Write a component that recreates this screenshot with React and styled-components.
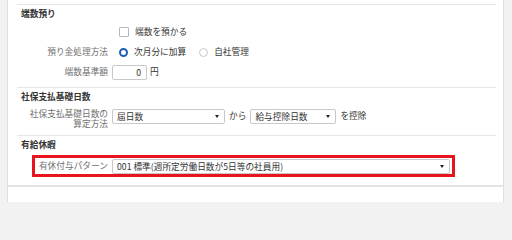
import React from 'react';
import styled, { createGlobalStyle } from 'styled-components';

const GlobalStyle = createGlobalStyle`
  html, body {
    margin: 0;
    padding: 0;
    background: #f2f2f2;
  }
  body {
    font-family: "Noto Sans CJK JP", "Liberation Sans", sans-serif;
    font-size: 8.7px;
    color: #333;
  }
`;

const Page = styled.div`
  width: 512px;
  height: 202px;
  padding: 0 8px 0 7px;
  box-sizing: border-box;
  overflow: hidden;
`;

const Panel = styled.div`
  background: #fff;
  border: 1px solid #e0e0e0;
  border-top: none;
  box-shadow: 0 1px 0 #e8e8e8;
`;

const PanelBody = styled.div`
  padding: 4px 7px 4px 9px;
  border-bottom: 2px solid #e4e4e4;
`;

const PanelFooter = styled.div`
  height: 19px;
`;

const Group = styled.div`
  border-top: 1px solid #e6e6e6;
  padding: 0 0 ${(p) => p.$bottom || 7}px 4px;
`;

const Heading = styled.div`
  padding-top: 3px;
  height: 12px;
  line-height: 12px;
  font-weight: bold;
  color: #333;
  margin-bottom: 4px;
`;

const Rows = styled.div`
  display: flex;
  flex-direction: column;
  gap: 4px;
`;

const Row = styled.div`
  display: flex;
  align-items: ${(p) => (p.$top ? 'flex-start' : 'center')};
  min-height: 16px;
  gap: 4px;
`;

const Label = styled.div`
  width: ${(p) => p.$width || 87}px;
  flex: none;
  text-align: right;
  color: #707070;
  line-height: ${(p) => (p.$multi ? '10px' : '16px')};
  padding-top: ${(p) => (p.$multi ? '2px' : '0')};
  white-space: nowrap;
`;

const Controls = styled.div`
  display: flex;
  align-items: center;
  gap: ${(p) => p.$gap || 0}px;
  padding-left: ${(p) => p.$indent || 0}px;
  margin-top: ${(p) => p.$mt || 0}px;
`;

const Option = styled.label`
  display: flex;
  align-items: center;
  gap: 6px;
  color: #333;
  line-height: 16px;
`;

const CheckBox = styled.span`
  width: 8px;
  height: 8px;
  border: 1px solid #b8b8b8;
  border-radius: 1px;
  background: #fff;
`;

const Radio = styled.span`
  box-sizing: border-box;
  width: 9px;
  height: 9px;
  border-radius: 50%;
  background: #fff;
  border: ${(p) => (p.$checked ? '2.5px solid #1c5fb5' : '1px solid #c8c8c8')};
`;

const NumberInput = styled.div`
  box-sizing: border-box;
  width: 35px;
  height: 15px;
  border: 1px solid #c8c8c8;
  border-radius: 2px;
  text-align: right;
  padding-right: 5px;
  line-height: 13px;
  color: #333;
`;

const Unit = styled.span`
  color: #333;
  line-height: 16px;
`;

const Select = styled.div`
  box-sizing: border-box;
  display: flex;
  align-items: center;
  width: ${(p) => p.$width}px;
  height: 15px;
  border: 1px solid #c8c8c8;
  border-radius: 2px;
  background: #fff;
  padding: 0 5px 0 4px;
  color: #333;
`;

const SelectText = styled.span`
  flex: 1;
  white-space: nowrap;
  overflow: hidden;
`;

const Caret = styled.span`
  width: 0;
  height: 0;
  border-left: 2.5px solid transparent;
  border-right: 2.5px solid transparent;
  border-top: 3px solid #222;
`;

const Text = styled.span`
  color: #333;
  line-height: 16px;
`;

const Highlight = styled.div`
  margin: 1px 41px 0 11px;
  border: 3px solid #e8141e;
  padding: 0 1px 0 0;
`;

const App = () => {
  return (
    <>
      <GlobalStyle />
      <Page>
        <Panel>
          <PanelBody>
            <Group>
              <Heading>端数預り</Heading>
              <Rows>
                <Row>
                  <Label />
                  <Controls $indent={7}>
                    <Option>
                      <CheckBox />
                      端数を預かる
                    </Option>
                  </Controls>
                </Row>
                <Row>
                  <Label>預り金処理方法</Label>
                  <Controls $indent={7} $gap={13}>
                    <Option>
                      <Radio $checked />
                      次月分に加算
                    </Option>
                    <Option>
                      <Radio />
                      自社管理
                    </Option>
                  </Controls>
                </Row>
                <Row>
                  <Label>端数基準額</Label>
                  <Controls $gap={3}>
                    <NumberInput>0</NumberInput>
                    <Unit>円</Unit>
                  </Controls>
                </Row>
              </Rows>
            </Group>

            <Group $bottom={6}>
              <Heading>社保支払基礎日数</Heading>
              <Rows>
                <Row $top>
                  <Label $multi>
                    社保支払基礎日数の
                    <br />
                    算定方法
                  </Label>
                  <Controls $gap={4} $mt={1}>
                    <Select $width={113}>
                      <SelectText>届日数</SelectText>
                      <Caret />
                    </Select>
                    <Text>から</Text>
                    <Select $width={86}>
                      <SelectText>給与控除日数</SelectText>
                      <Caret />
                    </Select>
                    <Text>を控除</Text>
                  </Controls>
                </Row>
              </Rows>
            </Group>

            <Group $bottom={4}>
              <Heading>有給休暇</Heading>
              <Highlight>
                <Row>
                  <Label $width={73}>有休付与パターン</Label>
                  <Select $width={338}>
                    <SelectText>001 標準(週所定労働日数が5日等の社員用)</SelectText>
                    <Caret />
                  </Select>
                </Row>
              </Highlight>
            </Group>
          </PanelBody>
          <PanelFooter />
        </Panel>
      </Page>
    </>
  );
};

export default App;
